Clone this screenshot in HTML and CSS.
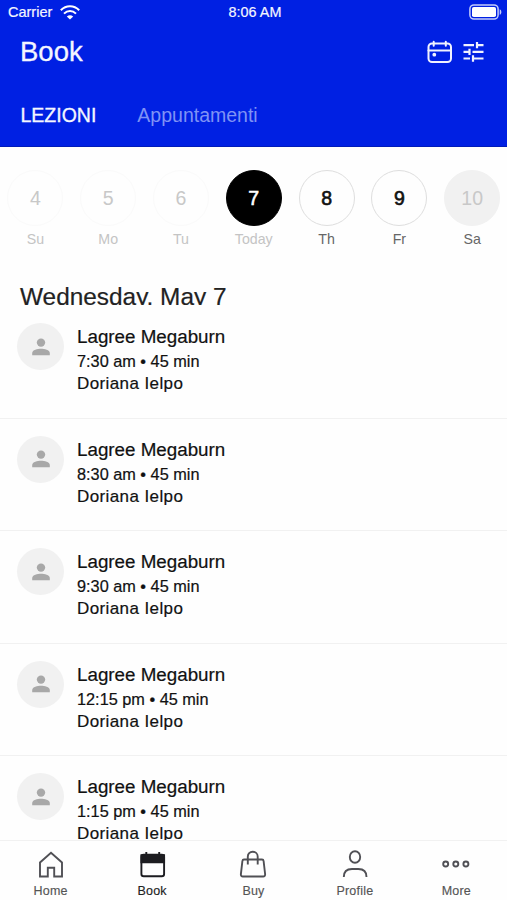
FILE: index.html
```html
<!DOCTYPE html>
<html lang="it">
<head>
<meta charset="utf-8">
<meta name="viewport" content="width=device-width, initial-scale=1">
<title>Book</title>
<link rel="stylesheet" href="styles.css">
</head>
<body>
<div class="app">
  <header class="header">
    <div class="status">
      <div class="carrier"><span>Carrier</span>
        <svg class="wifi" width="20" height="15" viewBox="0 0 20 15" fill="none" stroke="#fff" stroke-width="2"><path d="M.8 5.2C6-.2 14-.2 19.2 5.2M4 8.6c3.5-3.5 8.500-3.500 12 0"/><path d="M10 14.500 6.800 11.600Q10 8.900 13.200 11.600Z" fill="#fff" stroke="none"/></svg>
      </div>
      <span class="clock">8:06 AM</span>
      <svg class="battery" width="33" height="16" viewBox="0 0 33 16" fill="none"><rect x=".9" y=".9" width="28.200" height="14.200" rx="4" stroke="#c4ccfa" stroke-width="1.500"/><rect x="3" y="3" width="24" height="10" rx="1.800" fill="#fff"/><path d="M30.700 5.200c2.200.8 2.200 4.800 0 5.600z" fill="#c4ccfa"/></svg>
    </div>
    <div class="titlebar">
      <h1>Book</h1>
      <div class="actions">
        <svg width="26" height="24" viewBox="0 0 26 24" fill="none" stroke="#f0f2ff" stroke-width="2" stroke-linecap="round"><rect x="1.500" y="3.500" width="22.500" height="18.500" rx="3.500"/><path d="M1.500 10.500H24M6.700 1.800v4M18.800 1.800v4"/><circle cx="7.300" cy="14.700" r="1.900" fill="#f0f2ff" stroke="none"/></svg>
        <svg width="21" height="22" viewBox="0 0 21 22" fill="none" stroke="#f0f2ff" stroke-width="2.200"><path d="M.5 4.200H11M14 4.200h6.500M.5 10.900H6M9.500 10.900h11M.5 17.500H7M10 17.500h10.500M14 1v6.300M6.500 7.700V14M10 14.300v6.400"/></svg>
      </div>
    </div>
    <nav class="tabs"><span>LEZIONI</span><span class="muted">Appuntamenti</span></nav>
  </header>

  <section class="week">
    <div class="day past"><b>4</b><span>Su</span></div>
    <div class="day past"><b>5</b><span>Mo</span></div>
    <div class="day past"><b>6</b><span>Tu</span></div>
    <div class="day today"><b>7</b><span>Today</span></div>
    <div class="day"><b>8</b><span>Th</span></div>
    <div class="day"><b>9</b><span>Fr</span></div>
    <div class="day off"><b>10</b><span>Sa</span></div>
  </section>

  <main class="schedule">
    <h2>Wednesday, May 7</h2>
    <article class="lesson">
      <div class="avatar"><svg width="18" height="18" viewBox="0 0 18 18"><circle cx="9" cy="4.600" r="4.200"/><path d="M.2 17.300v-2.200C.2 12 5.500 10.800 9 10.800s8.800 1.200 8.800 4.300v2.200z"/></svg></div>
      <div><h3>Lagree Megaburn</h3><p class="time">7:30 am • 45 min</p><p class="coach">Doriana Ielpo</p></div>
    </article>
    <article class="lesson">
      <div class="avatar"><svg width="18" height="18" viewBox="0 0 18 18"><circle cx="9" cy="4.600" r="4.200"/><path d="M.2 17.300v-2.200C.2 12 5.500 10.800 9 10.800s8.800 1.200 8.800 4.300v2.200z"/></svg></div>
      <div><h3>Lagree Megaburn</h3><p class="time">8:30 am • 45 min</p><p class="coach">Doriana Ielpo</p></div>
    </article>
    <article class="lesson">
      <div class="avatar"><svg width="18" height="18" viewBox="0 0 18 18"><circle cx="9" cy="4.600" r="4.200"/><path d="M.2 17.300v-2.200C.2 12 5.500 10.800 9 10.800s8.800 1.200 8.800 4.300v2.200z"/></svg></div>
      <div><h3>Lagree Megaburn</h3><p class="time">9:30 am • 45 min</p><p class="coach">Doriana Ielpo</p></div>
    </article>
    <article class="lesson">
      <div class="avatar"><svg width="18" height="18" viewBox="0 0 18 18"><circle cx="9" cy="4.600" r="4.200"/><path d="M.2 17.300v-2.200C.2 12 5.500 10.800 9 10.800s8.800 1.200 8.800 4.300v2.200z"/></svg></div>
      <div><h3>Lagree Megaburn</h3><p class="time">12:15 pm • 45 min</p><p class="coach">Doriana Ielpo</p></div>
    </article>
    <article class="lesson">
      <div class="avatar"><svg width="18" height="18" viewBox="0 0 18 18"><circle cx="9" cy="4.600" r="4.200"/><path d="M.2 17.300v-2.200C.2 12 5.500 10.800 9 10.800s8.800 1.200 8.800 4.300v2.200z"/></svg></div>
      <div><h3>Lagree Megaburn</h3><p class="time">1:15 pm • 45 min</p><p class="coach">Doriana Ielpo</p></div>
    </article>
  </main>

  <nav class="bottom">
    <div class="item"><svg width="30" height="30" viewBox="0 0 30 30"><path d="M4 26.500V12.500L15 2.800l11 9.700v14h-7.800v-8.800h-6.400v8.800z"/></svg><span>Home</span></div>
    <div class="item active"><svg width="30" height="30" viewBox="0 0 30 30"><rect x="4.400" y="4.600" width="22.700" height="21.700" rx="2.300"/><path d="M4.400 5.300h22.700v7H4.400z" fill="#1c1c20"/><path d="M9.300 2v4M22.200 2v4"/></svg><span>Book</span></div>
    <div class="item"><svg width="30" height="30" viewBox="0 0 30 30"><path d="M6 9.500h18c1 0 1.500.6 1.600 1.500l1.500 13c.2 1.500-.6 2.500-2 2.500H4.900c-1.400 0-2.200-1-2-2.500L4.400 11c.1-.9.600-1.500 1.600-1.500z"/><path d="M9.800 14.500V6.700c0-2.800 2-4.900 4.900-4.900s5 2.100 5 4.900v7.800"/></svg><span>Buy</span></div>
    <div class="item"><svg width="30" height="30" viewBox="0 0 30 30"><ellipse cx="15" cy="7" rx="5.200" ry="5.800"/><path d="M3.800 27c0-5.200 3.300-8 8.200-8h6.300c4.900 0 8.200 2.800 8.200 8"/></svg><span>Profile</span></div>
    <div class="item"><svg width="30" height="30" viewBox="0 0 30 30"><circle cx="4.700" cy="14" r="2.500"/><circle cx="14.800" cy="14" r="2.500"/><circle cx="24.900" cy="14" r="2.500"/></svg><span>More</span></div>
  </nav>
</div>
</body>
</html>
```
FILE: styles.css
```css
* { box-sizing: border-box; margin: 0; padding: 0; }
body { font-family: "Liberation Sans", Arial, sans-serif; background: #fefefe; color: #111; }
svg { display: block; flex: none; }
.app { height: 900px; width: 507px; display: flex; flex-direction: column; overflow: hidden; }

.header { height: 147px; flex: none; background: #0020e3; border-bottom: 1px solid #001bb8; color: #f4f6ff; }
.status { height: 24px; display: grid; grid-template-columns: 1fr auto 1fr; align-items: center; padding: 0 5px 0 8px; font-size: 14.5px; line-height: 24px; -webkit-text-stroke: .2px; }
.carrier { display: flex; align-items: center; gap: 8px; }
.clock { font-size: 14.400px; }
.battery { justify-self: end; }
.titlebar { height: 56px; display: flex; align-items: center; justify-content: space-between; padding: 0 23px 0 20px; }
h1 { font-size: 27.500px; font-weight: 400; line-height: 56px; -webkit-text-stroke: .3px; }
.actions { display: flex; align-items: center; gap: 10px; }
.tabs { display: flex; gap: 41px; padding: 22px 0 0 20.500px; font-size: 19.500px; line-height: 26px; }
.tabs span:first-child { -webkit-text-stroke: .3px; }
.tabs .muted { color: #7f92f5; }

.week { flex: none; height: 126px; display: grid; grid-template-columns: repeat(7, 72.800px); padding-top: 23px; margin-left: -1px; }
.day { display: flex; flex-direction: column; align-items: center; font-size: 14.200px; color: #666; }
.day b { width: 56px; height: 56px; border-radius: 50%; border: 1px solid #dedede; font-size: 19.500px; line-height: 54px; font-weight: 400; text-align: center; color: #111; -webkit-text-stroke: .6px; }
.day span { margin-top: 4px; line-height: 18px; }
.day.past, .day.today { color: #c4c4c4; }
.day.past b { color: #c8c8c8; border-color: #fafafa; -webkit-text-stroke: 0; }
.day.today b { background: #000; border-color: #000; color: #fff; }
.day.off b { background: #f1f1f1; border-color: #f1f1f1; color: #c8c8c8; -webkit-text-stroke: 0; }

.schedule { flex: 1; min-height: 0; overflow: hidden; padding-top: 9px; }
h2 { height: 23px; margin-bottom: 1px; overflow: hidden; padding-left: 20px; font-size: 24.400px; line-height: 29px; font-weight: 400; color: #222; -webkit-text-stroke: .2px; }
.lesson { height: 112.500px; display: flex; gap: 13px; padding: 17px 0 0 17px; border-bottom: 1px solid #f1f1f1; -webkit-text-stroke: .2px; }
.avatar { flex: none; width: 47px; height: 47px; border-radius: 50%; background: #f1f1f1; display: flex; align-items: center; justify-content: center; }
.avatar svg { fill: #a8a8a8; }
h3 { font-size: 18.800px; line-height: 27px; font-weight: 400; }
.time { font-size: 16.300px; line-height: 22px; }
.coach { font-size: 17px; line-height: 23px; letter-spacing: .4px; }

.bottom { flex: none; height: 60px; display: grid; grid-template-columns: repeat(5, 1fr); border-top: 1px solid #f1f1f1; background: #fefefe; }
.item { display: flex; flex-direction: column; align-items: center; padding-top: 9px; color: #555; font-size: 12.500px; -webkit-text-stroke: .15px; }
.item svg { fill: none; stroke: #505055; stroke-width: 1.900; }
.item span { margin-top: 3px; line-height: 16px; letter-spacing: .2px; }
.item.active { color: #222; }
.item.active svg { stroke: #1c1c20; }
```
